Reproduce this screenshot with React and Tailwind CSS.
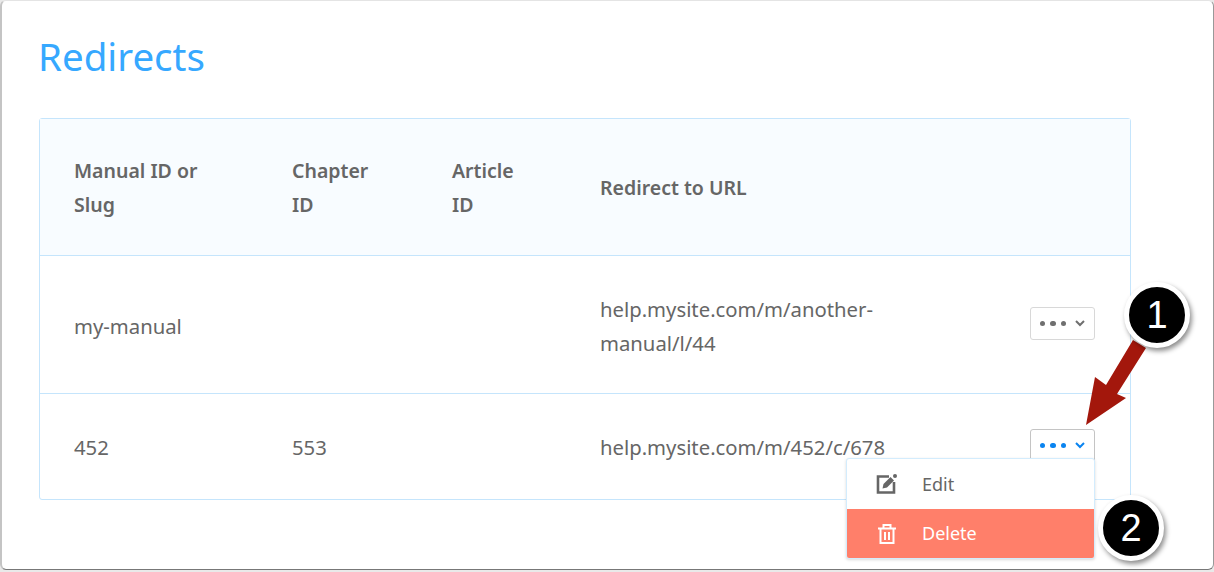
function MenuButton({ active }) {
  return (
    <div
      className={`mb-[2px] flex h-[33px] w-[65px] items-center justify-center gap-[9px] rounded-[3px] border bg-white ${
        active ? "border-[#c4c4c4] text-[#0a84f0]" : "border-[#d8d8d8] text-[#6f6f6f]"
      }`}
    >
      <span className="flex gap-[5px]">
        <i className="size-[5.5px] rounded-full bg-current" />
        <i className="size-[5.5px] rounded-full bg-current" />
        <i className="size-[5.5px] rounded-full bg-current" />
      </span>
      <svg width="10" height="7" viewBox="0 0 10 7" fill="none">
        <path d="M1 1l4 4 4-4" stroke="currentColor" strokeWidth="2" />
      </svg>
    </div>
  );
}

function Callout({ n, className }) {
  return (
    <div
      className={`absolute flex size-[66px] items-center justify-center rounded-full border-[5px] border-white bg-black font-['Liberation_Sans',sans-serif] text-[38px] text-white shadow-[2px_3px_5px_rgba(0,0,0,0.45)] ${className}`}
    >
      {n}
    </div>
  );
}

export default function App() {
  return (
    <div className="relative h-[572px] w-[1214px] overflow-hidden bg-[#e9e9e9] font-['Noto_Sans',sans-serif] text-[#666]">
      <div className="h-[570px] rounded-[6px] border-t border-l-2 border-r border-b border-t-[#e4e4e4] border-l-[#c4c4c4] border-r-[#999] border-b-[#777] bg-white pl-[37px] pt-[29px]">
        <h1 className="-ml-px h-[88px] text-[38.5px] leading-[52px] text-[#36a8ff]">Redirects</h1>

        <div className="h-[382px] w-[1092px] rounded-[3px] border border-[#c5e5fc] text-[20.3px] leading-[34px]">
          <div className="grid h-[137px] grid-cols-[218px_160px_148px_1fr] items-center border-b border-[#c5e5fc] bg-[#f8fcff] pl-[34px] pt-[2px] text-[19.5px] font-semibold">
            <div className="w-[140px]">Manual ID or Slug</div>
            <div className="w-[80px]">Chapter ID</div>
            <div className="w-[80px]">Article ID</div>
            <div>Redirect to URL</div>
          </div>
          <div className="grid h-[138px] grid-cols-[218px_160px_148px_430px_1fr] items-center border-b border-[#c5e5fc] pl-[34px]">
            <div className="pt-[2px]">my-manual</div>
            <div />
            <div />
            <div className="w-[300px] pt-[2px]">help.mysite.com/m/another-manual/l/44</div>
            <MenuButton />
          </div>
          <div className="grid h-[105px] grid-cols-[218px_160px_148px_430px_1fr] items-center pl-[34px]">
            <div>452</div>
            <div>553</div>
            <div />
            <div>help.mysite.com/m/452/c/678</div>
            <MenuButton active />
          </div>
        </div>
      </div>

      {/* dropdown */}
      <div className="absolute left-[846px] top-[458px] w-[249px] overflow-hidden rounded-[3px] border border-[#d3ecfd] bg-white text-[18px] shadow-[0_1px_3px_rgba(0,0,0,0.15)]">
        <div className="flex h-[50px] items-center pl-[29px] text-[#666]">
          <svg width="22" height="22" viewBox="0 0 22 22" fill="none" className="mr-[24px]">
            <path d="M13 3.5H2v16h16V9" stroke="#666" strokeWidth="2.6" />
            <path d="M6.5 15.5l1-4.5 7-7 3.5 3.5-7 7z" fill="#666" />
            <circle cx="19" cy="3" r="2" fill="#666" />
          </svg>
          Edit
        </div>
        <div className="flex h-[49px] items-center bg-[#ff7f6a] pl-[31px] text-white">
          <svg width="18" height="20" viewBox="0 0 18 20" fill="none" className="mr-[26px]">
            <path d="M0 4.5h18M5.5 4V1h7v3M2.5 5v14h13V5M7 8v8M11 8v8" stroke="#fff" strokeWidth="2" />
          </svg>
          Delete
        </div>
      </div>

      {/* annotations */}
      <svg width="75" height="100" viewBox="0 0 75 100" className="absolute left-[1075px] top-[330px]">
        <path d="M11 95L20 47L31 55L58 10L71 18L42 64L51 68z" fill="#a3170c" />
      </svg>
      <Callout n="1" className="left-[1124px] top-[282px]" />
      <Callout n="2" className="left-[1098px] top-[495px]" />
    </div>
  );
}
